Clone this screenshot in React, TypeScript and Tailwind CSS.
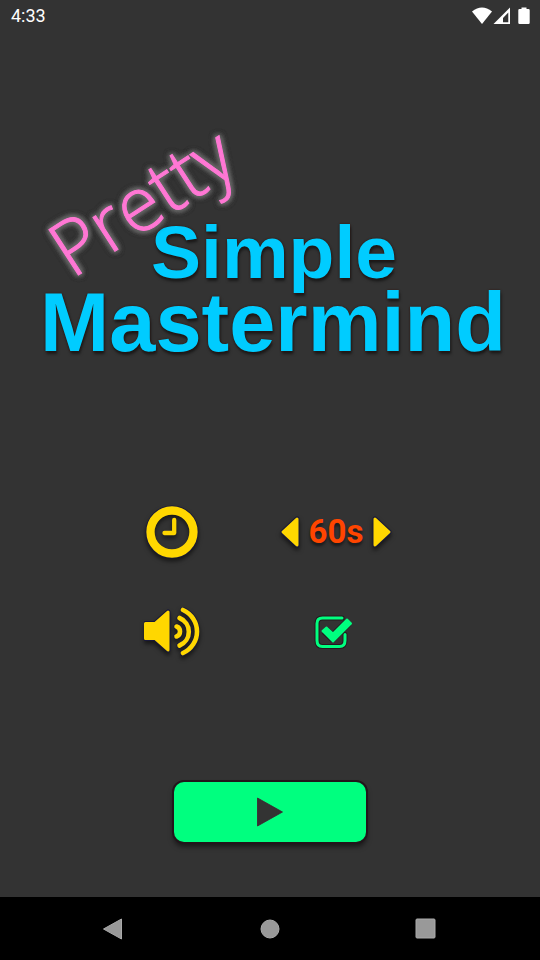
import { useState } from "react";

function StatusBar() {
  return (
    <header className="flex h-8 items-center justify-between pr-[9px] pl-[11px] text-white">
      <span className="font-[Roboto,sans-serif] text-lg leading-8">4:33</span>
      <div className="flex items-center">
        <svg className="h-[18px] w-[60px]" viewBox="0 0 60 18" fill="currentColor" aria-hidden="true">
          <path d="M1 4.500Q11 -3.500 21 4.500L11 17Z" />
          <path fillRule="evenodd" d="M39 .5V17H22.500ZM37.300 5.500L32 11V15.300H37.300Z" />
          <path d="M50.500 .500h5v1.500h2q1.200 0 1.200 1.200v12.600q0 1.200-1.200 1.200h-9q-1.200 0-1.200-1.200V3.200q0-1.200 1.200-1.200h2Z" />
        </svg>
      </div>
    </header>
  );
}

function Title() {
  return (
    <h1 className="relative flex flex-col items-center font-['Liberation_Sans',Arial,sans-serif] font-bold text-[#00ccff]">
      <span className="pl-0.5 text-[75px] leading-[72px] [text-shadow:0_0_2px_#321008,1px_3px_3px_rgba(0,0,0,0.5)]">
        Simple
      </span>
      <span className="text-[83px] leading-[69px] [text-shadow:0_0_2px_#321008,1px_3px_3px_rgba(0,0,0,0.5)]">
        Mastermind
      </span>
      <span className="absolute -top-12 left-0 -rotate-[33deg] font-['Open_Sans',sans-serif] text-[76px] leading-[64px] font-light text-[#ff77d4] [-webkit-text-stroke:1px_#ff77d4] [text-shadow:0_0_5px_#666,0_0_5px_#666,0_0_5px_#666,0_0_6px_#666,0_0_6px_#666,0_0_7px_#666,0_0_7px_#666]">
        Pretty
      </span>
    </h1>
  );
}

const shadow = "drop-shadow-[0_3px_2px_rgba(0,0,0,0.55)]";

function Settings() {
  const times = [30, 60, 90, 120];
  const [index, setIndex] = useState(1);
  const [sound, setSound] = useState(true);
  const step = (by: number) => setIndex((index + by + times.length) % times.length);

  return (
    <div className="mt-[147px] grid grid-cols-[56px_112px] items-center justify-items-center gap-x-20 gap-y-[43px] pr-1">
      <svg className={`size-14 ${shadow}`} viewBox="0 0 56 56" fill="none" stroke="#ffd700" role="img" aria-label="Time limit">
        <circle cx="28" cy="28" r="25" stroke="#18183a" strokeWidth="3" />
        <circle cx="28" cy="28" r="21.500" strokeWidth="8.300" />
        <path d="M30.200 16V29H20.500" strokeWidth="4.300" strokeLinecap="round" strokeLinejoin="round" />
      </svg>

      <div className="flex w-full items-center justify-between">
        <button type="button" aria-label="Less time" onClick={() => step(-1)}>
          <svg className={`h-8 w-5 ${shadow}`} viewBox="0 0 20 32" aria-hidden="true">
            <path d="M17 3V29L3 16Z" fill="#ffd700" stroke="#18183a" strokeWidth="5" strokeLinejoin="round" />
            <path d="M17 3V29L3 16Z" fill="#ffd700" stroke="#ffd700" strokeWidth="3" strokeLinejoin="round" />
          </svg>
        </button>
        <output className="font-[Roboto,sans-serif] text-[33px] leading-9 font-bold text-[#ff4500] [text-shadow:0_3px_3px_rgba(0,0,0,0.5)]">
          {times[index]}s
        </output>
        <button type="button" aria-label="More time" onClick={() => step(1)}>
          <svg className={`h-8 w-5 ${shadow}`} viewBox="0 0 20 32" aria-hidden="true">
            <path d="M3 3V29L17 16Z" fill="#ffd700" stroke="#18183a" strokeWidth="5" strokeLinejoin="round" />
            <path d="M3 3V29L17 16Z" fill="#ffd700" stroke="#ffd700" strokeWidth="3" strokeLinejoin="round" />
          </svg>
        </button>
      </div>

      <svg className={`size-14 ${shadow}`} viewBox="0 0 56 56" fill="none" strokeLinecap="round" strokeLinejoin="round" role="img" aria-label="Sound">
        <path d="M1.500 20.500H11L24 9V47L11 35.500H1.500Z" fill="#ffd700" stroke="#18183a" strokeWidth="5" />
        <path d="M1.500 20.500H11L24 9V47L11 35.500H1.500Z" fill="#ffd700" stroke="#ffd700" strokeWidth="3" />
        <g stroke="#18183a" strokeWidth="6">
          <path d="M32.500 23.500A5.300 5.300 0 0 1 32.500 33.500" />
          <path d="M35.500 15A14.800 14.800 0 0 1 35.500 42.500" />
          <path d="M39 7A23.500 23.500 0 0 1 39 50" />
        </g>
        <g stroke="#ffd700" strokeWidth="4.600">
          <path d="M32.500 23.500A5.300 5.300 0 0 1 32.500 33.500" />
          <path d="M35.500 15A14.800 14.800 0 0 1 35.500 42.500" />
          <path d="M39 7A23.500 23.500 0 0 1 39 50" />
        </g>
      </svg>

      <label className="mr-1.5 grid size-10 cursor-pointer place-items-center">
        <input
          type="checkbox"
          aria-label="Sound on"
          checked={sound}
          onChange={(e) => setSound(e.target.checked)}
          className="col-start-1 row-start-1 size-10 appearance-none"
        />
        <svg className="pointer-events-none col-start-1 row-start-1 size-10" viewBox="0 -1 40 40" fill="none" aria-hidden="true">
          <path d="M29 6H9.500Q4 6 4 11.500V28.500Q4 34.500 9.500 34.500H26.500Q32 34.500 32 28.500V22.500" stroke="#241a1e" strokeWidth="5" strokeLinecap="round" />
          <path d="M29 6H9.500Q4 6 4 11.500V28.500Q4 34.500 9.500 34.500H26.500Q32 34.500 32 28.500V22.500" stroke="#00ff7f" strokeWidth="3" strokeLinecap="round" />
          {sound && (
            <>
              <path d="M12 18.500L19.500 25.500L35 10.500" stroke="#241a1e" strokeWidth="9" strokeLinejoin="round" />
              <path d="M9.500 19L13.500 15.500L20 21.500L34 7.500L38 11.500L20 29.500Z" fill="#00ff7f" stroke="#00ff7f" strokeWidth="2" strokeLinejoin="round" />
            </>
          )}
        </svg>
      </label>
    </div>
  );
}

function NavBar() {
  return (
    <nav className="grid h-[63px] grid-cols-3 place-items-center bg-black px-9 text-[#999]">
      <button type="button" aria-label="Back">
        <svg className="size-6" viewBox="0 0 24 24" aria-hidden="true">
          <path d="M19.500 2V22L1.500 12Z" fill="#999" stroke="#aaa" strokeLinejoin="round" />
        </svg>
      </button>
      <button type="button" aria-label="Home">
        <svg className="size-6" viewBox="0 0 24 24" aria-hidden="true">
          <circle cx="12" cy="12" r="9" fill="#999" stroke="#aaa" />
        </svg>
      </button>
      <button type="button" aria-label="Recent apps">
        <svg className="size-6" viewBox="0 0 24 24" aria-hidden="true">
          <rect x="2" y="2" width="19" height="19" rx="1" fill="#999" stroke="#aaa" />
        </svg>
      </button>
    </nav>
  );
}

export default function App() {
  return (
    <div className="flex min-h-screen flex-col bg-[#333]">
      <StatusBar />
      <main className="flex flex-1 flex-col items-center pt-46 pb-8">
        <div className="pl-1.5">
          <Title />
        </div>
        <Settings />
        <button
          type="button"
          aria-label="Play"
          className="mt-[123px] flex h-[60px] w-48 items-center justify-center rounded-[10px] bg-[#00ff7f] shadow-[0_0_0_2px_#22151b,0_4px_5px_1px_rgba(0,0,0,0.5)]"
        >
          <svg className="h-[30px] w-[26px]" viewBox="0 0 26 30" aria-hidden="true">
            <path d="M.500 1V29L25.500 15Z" fill="#333" stroke="#43202f" strokeWidth=".800" />
          </svg>
        </button>
      </main>
      <NavBar />
    </div>
  );
}
